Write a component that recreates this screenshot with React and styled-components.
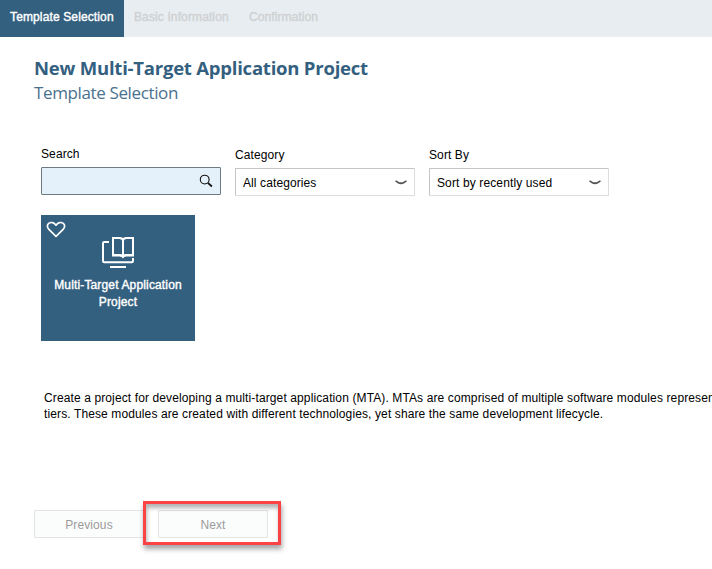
import React from "react";
import styled, { createGlobalStyle } from "styled-components";

const GlobalStyle = createGlobalStyle`
  * { box-sizing: border-box; }
  body { margin: 0; background: #fff; overflow: hidden; font-family: "Liberation Sans", Arial, sans-serif; font-size: 12px; color: #000; }
  h1, h2, p { margin: 0; }
  button, input { font-family: inherit; font-size: inherit; }
`;

const Page = styled.div`
  width: 712px;
  height: 569px;
  overflow: hidden;
`;

const Steps = styled.nav`
  display: flex;
  height: 37px;
  background: #e8edf1;
`;

const Step = styled.div`
  padding: 0 10px;
  line-height: 34px;
  -webkit-text-stroke: 0.38px currentColor;
  white-space: nowrap;
  width: ${(p) => p.$width}px;
  letter-spacing: ${(p) => p.$spacing || 0}px;
  color: ${(p) => (p.$active ? "#fff" : "#cfd1d2")};
  background: ${(p) => (p.$active ? "#346080" : "transparent")};
`;

const Content = styled.main`
  padding: 18px 0 0 34px;
`;

const Title = styled.h1`
  height: 26px;
  font: bold 18.5px/26px "Open Sans", "Noto Sans", sans-serif;
  color: #346080;
  letter-spacing: -0.22px;
  white-space: nowrap;
`;

const Subtitle = styled.h2`
  font: 400 17px/24px "Open Sans", "Noto Sans", sans-serif;
  letter-spacing: -0.37px;
  color: #4a718e;
  height: 24px;
  white-space: nowrap;
`;

const Filters = styled.div`
  display: flex;
  gap: 14px;
  padding: 42px 0 0 7px;
`;

const Field = styled.div`
  width: 180px;
  padding-top: ${(p) => p.$top || 0}px;
`;

const Label = styled.label`
  display: block;
  height: 20px;
  line-height: 14px;
  letter-spacing: ${(p) => p.$spacing || 0}px;
`;

const Control = styled.div`
  display: flex;
  align-items: center;
  justify-content: space-between;
  height: 28px;
  padding: ${(p) => (p.$focus ? "0 7px" : "2px 7px 0")};
  border: 1px solid ${(p) => (p.$focus ? "#6f7b83" : "#c3c5c7")};
  border-bottom-color: ${(p) => (p.$focus ? "#6f7b83" : "#dcdddd")};
  border-right-color: ${(p) => (p.$focus ? "#6f7b83" : "#dcdddd")};
  border-radius: 1px;
  background: ${(p) => (p.$focus ? "#e4f1fa" : "#fff")};
  letter-spacing: ${(p) => p.$spacing || 0}px;
`;

const SearchInput = styled.input`
  border: 0;
  padding: 0;
  outline: 0;
  background: transparent;
  width: 145px;
`;

const Tile = styled.div`
  position: relative;
  display: flex;
  flex-direction: column;
  align-items: center;
  width: 154px;
  height: 126px;
  margin: 19px 0 0 7px;
  padding-top: 20px;
  background: #346080;
  color: #fff;
`;

const Favorite = styled.span`
  position: absolute;
  left: 5px;
  top: 6px;
  display: flex;
`;

const TileName = styled.div`
  margin-top: 8px;
  -webkit-text-stroke: 0.38px currentColor;
  letter-spacing: 0.15px;
  line-height: 17px;
  text-align: center;
  white-space: nowrap;
`;

const Description = styled.p`
  margin: 49px 0 0 10px;
  line-height: 16px;
  white-space: nowrap;
`;

const DescriptionLine = styled.span`
  display: block;
  letter-spacing: ${(p) => p.$spacing || 0}px;
`;

const Actions = styled.div`
  display: flex;
  gap: 14px;
  margin-top: 88px;
`;

const ButtonSlot = styled.div`
  position: relative;
  display: flex;
`;

const Button = styled.button`
  width: 110px;
  height: 28px;
  padding: 1px 0 0;
  border: 1px solid #e3e5e5;
  border-radius: 1px;
  background: #fbfdfc;
  color: #9b9b9b;
  letter-spacing: ${(p) => p.$spacing || 0}px;
`;

const Highlight = styled.span`
  position: absolute;
  left: -15px;
  top: -9px;
  width: 138px;
  height: 44px;
  border: 3px solid #fb4245;
  box-shadow: 1px 4px 5px rgba(0, 0, 0, 0.36), inset 1px 4px 4px rgba(0, 0, 0, 0.3);
`;

const SearchIcon = () => (
  <svg width="14" height="14" viewBox="0 0 14 14" fill="none" stroke="#111">
    <circle cx="5.7" cy="5.6" r="4.4" strokeWidth="1.1" />
    <path d="M8.9 8.8 12.9 12.5" strokeWidth="1.8" />
  </svg>
);

const ChevronIcon = () => (
  <svg width="12" height="6" viewBox="0 0 12 6" fill="#555">
    <path d="M.2 .8 1.6.4C3 1.7 4.6 2.3 6 2.3S9 1.7 10.4.4L11.8.8V1.6C10 3 8 4.3 6 4.3S2 3 .2 1.6Z" />
  </svg>
);

const HeartIcon = () => (
  <svg width="20" height="17" viewBox="0 0 20 17" fill="none" stroke="#fff" strokeWidth="1.7" strokeLinejoin="round">
    <path d="M10 15.4 2.9 8.4C.8 6.3 1 3.7 2.7 2.4 4.9.8 8 1.4 10 4.2 12 1.4 15.1.8 17.3 2.4 19 3.7 19.2 6.3 17.1 8.4Z" />
  </svg>
);

const ProjectIcon = () => (
  <svg width="34" height="34" viewBox="0 0 34 34" fill="none" stroke="#fff">
    <path d="M8 7H3.3Q2 7 2 8.3V26Q2 27.3 3.3 27.3H30.7Q32 27.3 32 26V23" strokeWidth="2" />
    <path d="M9 32H25" strokeWidth="2" />
    <path d="M12 20.8V3H18.5Q21.5 3 22 5.3 22.5 3 25.3 3H32V20.8" strokeWidth="2" />
    <path d="M22 4.5V21" strokeWidth="2" />
    <path d="M11 19H18.7Q21 19 22 20.1 23 19 25.1 19H33V21.6H25.2Q23 21.6 22 23.4 21 21.6 18.2 21.6H11Z" fill="#fff" stroke="none" />
  </svg>
);

export default function App() {
  return (
    <Page>
      <GlobalStyle />
      <Steps>
        <Step $active $width={124} $spacing={0.13}>Template Selection</Step>
        <Step $width={115} $spacing={0.12}>Basic Information</Step>
        <Step $width={90} $spacing={0.08}>Confirmation</Step>
      </Steps>
      <Content>
        <Title>New Multi-Target Application Project</Title>
        <Subtitle>Template Selection</Subtitle>
        <Filters>
          <Field>
            <Label $spacing={0.1}>Search</Label>
            <Control $focus>
              <SearchInput aria-label="Search" />
              <SearchIcon />
            </Control>
          </Field>
          <Field $top={1}>
            <Label $spacing={0.1}>Category</Label>
            <Control $spacing={0.1}>All categories<ChevronIcon /></Control>
          </Field>
          <Field $top={1}>
            <Label $spacing={0.1}>Sort By</Label>
            <Control $spacing={0.12}>Sort by recently used<ChevronIcon /></Control>
          </Field>
        </Filters>
        <Tile>
          <Favorite><HeartIcon /></Favorite>
          <ProjectIcon />
          <TileName>Multi-Target Application<br />Project</TileName>
        </Tile>
        <Description>
          <DescriptionLine $spacing={0.117}>Create a project for developing a multi-target application (MTA). MTAs are comprised of multiple software modules represen</DescriptionLine>
          <DescriptionLine $spacing={0.117}>tiers. These modules are created with different technologies, yet share the same development lifecycle.</DescriptionLine>
        </Description>
        <Actions>
          <Button $spacing={0.1} disabled>Previous</Button>
          <ButtonSlot>
            <Button $spacing={0.1} disabled>Next</Button>
            <Highlight />
          </ButtonSlot>
        </Actions>
      </Content>
    </Page>
  );
}
